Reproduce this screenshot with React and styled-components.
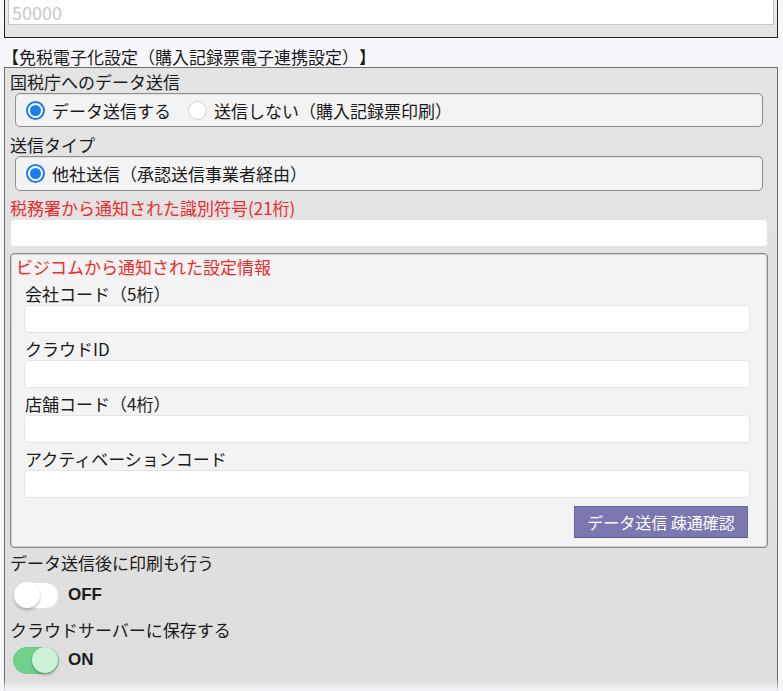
import React from "react";
import styled, { createGlobalStyle } from "styled-components";

const GlobalStyle = createGlobalStyle`
  html, body {
    margin: 0;
    padding: 0;
    background: #f7f7fb;
    overflow: hidden;
  }
  body {
    font-family: "Noto Sans CJK JP", "Liberation Sans", sans-serif;
    font-size: 17px;
    color: #1a1a1a;
    text-spacing-trim: space-all;
  }
`;

const Page = styled.div`
  width: 783px;
  height: 691px;
  padding: 0 5px 0 4px;
  box-sizing: border-box;
`;

const TopBox = styled.div`
  border: 1px solid #222;
  border-top: none;
  background: linear-gradient(#ececec, #e2e2e2);
  padding: 0 3px 12px 3px;
`;

const TopInput = styled.div`
  height: 24px;
  background: #fff;
  border-left: 1px solid #bdbdbd;
  border-right: 1px solid #bdbdbd;
  border-bottom: 1px solid #c8c8c8;
  color: #c6c6c6;
  line-height: 24px;
  padding-left: 3px;
  font-size: 18px;
`;

const SectionTitle = styled.div`
  margin: 8px 0 0 -2px;
  height: 21px;
  line-height: 21px;
  white-space: nowrap;
`;

const Panel = styled.div`
  position: relative;
  border: 1px solid #6c6c6c;
  border-bottom: none;
  background: linear-gradient(#e4e4e4, #dedede);
  padding: 3px 9px 14px 5px;
  height: 625px;
  box-sizing: border-box;

  &::after {
    content: "";
    position: absolute;
    left: -1px;
    right: -1px;
    bottom: 0;
    height: 12px;
    background: linear-gradient(rgba(247, 247, 251, 0), #f7f7fb);
  }
`;

const Label = styled.div`
  height: 22px;
  line-height: 22px;
  margin-top: ${(p) => p.$mt || 0}px;
  color: ${(p) => (p.$red ? "#ef2a2a" : "#1a1a1a")};
  white-space: nowrap;
`;

const RadioBox = styled.div`
  margin: ${(p) => p.$mt || 0}px 5px 0 5px;
  height: ${(p) => p.$h}px;
  box-sizing: border-box;
  border: 1px solid #8e8e8e;
  border-radius: 5px;
  background: #f3f3f3;
  box-shadow: inset 0 1px 1px rgba(0, 0, 0, 0.08);
  display: flex;
  align-items: center;
  padding-left: 10px;
  gap: 17px;
`;

const RadioItem = styled.label`
  display: flex;
  align-items: center;
  gap: 7px;
  white-space: nowrap;
`;

const RadioCircle = styled.span`
  width: 19px;
  height: 19px;
  border-radius: 50%;
  box-sizing: border-box;
  border: ${(p) => (p.$on ? "2px solid #1b7cf4" : "1px solid #d2d2d2")};
  background: #fff;
  display: flex;
  align-items: center;
  justify-content: center;

  &::after {
    content: "";
    width: 11px;
    height: 11px;
    border-radius: 50%;
    background: ${(p) => (p.$on ? "#1b7cf4" : "transparent")};
  }
`;

const TextInput = styled.div`
  height: 28px;
  box-sizing: border-box;
  background: #fff;
  border: 1px solid #e4e4e4;
  border-radius: 4px;
  margin: ${(p) => p.$mt || 0}px ${(p) => p.$mr || 0}px 0 ${(p) => p.$ml || 0}px;
`;

const Fieldset = styled.div`
  margin-top: 6px;
  border: 1px solid #8a8a8a;
  box-shadow: inset 0 0 0 1px #cfcfcf;
  border-radius: 4px;
  background: #f3f3f3;
  padding: 2px 0 9px 5px;
  display: flex;
  flex-direction: column;
`;

const FieldLabel = styled.div`
  height: 22px;
  line-height: 22px;
  margin: 5px 0 0 9px;
  white-space: nowrap;
`;

const ButtonRow = styled.div`
  display: flex;
  justify-content: flex-end;
  margin: 8px 19px 0 0;
`;

const Button = styled.button`
  width: 174px;
  height: 32px;
  background: #7a77b1;
  border: 1px solid #6a67a0;
  border-bottom-color: #5b5890;
  color: #fff;
  font-family: "Noto Sans CJK JP", "Liberation Sans", sans-serif;
  font-size: 16px;
  padding: 0;
`;

const ToggleRow = styled.div`
  display: flex;
  align-items: center;
  gap: 9px;
  margin: ${(p) => p.$mt}px 0 0 3px;
  height: 28px;
`;

const Track = styled.span`
  width: 46px;
  height: 27px;
  border-radius: 14px;
  box-sizing: border-box;
  background: ${(p) => (p.$on ? "#72d08d" : "#fff")};
  border: 1px solid ${(p) => (p.$on ? "#6bc887" : "#e2e2e2")};
  display: flex;
  justify-content: ${(p) => (p.$on ? "flex-end" : "flex-start")};
  align-items: center;
`;

const Knob = styled.span`
  width: 26px;
  height: 26px;
  border-radius: 50%;
  background: ${(p) => (p.$on ? "#cdf1d6" : "#fff")};
  box-shadow: 0 2px 3px rgba(0, 0, 0, 0.25);
`;

const ToggleText = styled.span`
  font-family: "Liberation Sans", Arial, sans-serif;
  font-weight: bold;
  font-size: 17px;
`;

const fields = [
  "会社コード（5桁）",
  "クラウドID",
  "店舗コード（4桁）",
  "アクティベーションコード",
];

function Toggle({ on, mt }) {
  return (
    <ToggleRow $mt={mt}>
      <Track $on={on}>
        <Knob $on={on} />
      </Track>
      <ToggleText>{on ? "ON" : "OFF"}</ToggleText>
    </ToggleRow>
  );
}

export default function App() {
  return (
    <Page>
      <GlobalStyle />
      <TopBox>
        <TopInput>50000</TopInput>
      </TopBox>
      <SectionTitle>【免税電子化設定（購入記録票電子連携設定）】</SectionTitle>
      <Panel>
        <Label>国税庁へのデータ送信</Label>
        <RadioBox $h={34}>
          <RadioItem>
            <RadioCircle $on />
            データ送信する
          </RadioItem>
          <RadioItem>
            <RadioCircle />
            送信しない（購入記録票印刷）
          </RadioItem>
        </RadioBox>
        <Label $mt={7}>送信タイプ</Label>
        <RadioBox $h={35}>
          <RadioItem>
            <RadioCircle $on />
            他社送信（承認送信事業者経由）
          </RadioItem>
        </RadioBox>
        <Label $red $mt={6}>税務署から通知された識別符号(21桁)</Label>
        <TextInput />
        <Fieldset>
          <Label $red>ビジコムから通知された設定情報</Label>
          {fields.map((f) => (
            <React.Fragment key={f}>
              <FieldLabel>{f}</FieldLabel>
              <TextInput $ml={8} $mr={17} />
            </React.Fragment>
          ))}
          <ButtonRow>
            <Button>データ送信 疎通確認</Button>
          </ButtonRow>
        </Fieldset>
        <Label $mt={4}>データ送信後に印刷も行う</Label>
        <Toggle on={false} mt={7} />
        <Label $mt={10}>クラウドサーバーに保存する</Label>
        <Toggle on mt={5} />
      </Panel>
    </Page>
  );
}
